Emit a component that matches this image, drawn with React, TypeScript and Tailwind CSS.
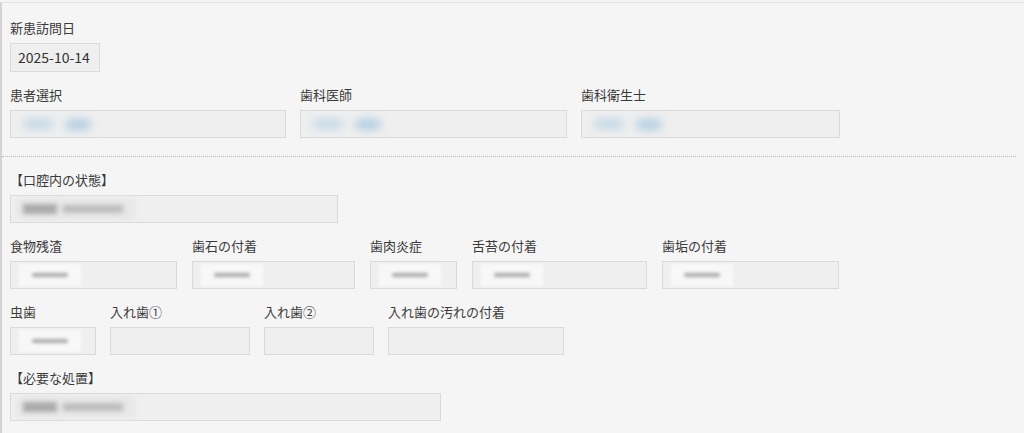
const font = 'font-["Noto_Sans_CJK_JP","Noto_Sans",sans-serif]';

type Blur = 'name' | 'short' | 'long' | 'none';

function BlurContent({ kind }: { kind: Blur }) {
  if (kind === 'name') {
    return (
      <span className="flex items-center gap-[12px] pl-[12px] blur-[4px]">
        <span className="h-[10px] w-[30px] rounded-full bg-[#c4d8e6]" />
        <span className="h-[11px] w-[26px] rounded-full bg-[#b3cfe2]" />
      </span>
    );
  }
  if (kind === 'short') {
    return (
      <span className="ml-[8px] flex h-[22px] w-[62px] items-center justify-center bg-[#f8f8f8] blur-[1px]">
        <span className="h-[4px] w-[36px] rounded-full bg-[#a8a8a8] blur-[1.5px]" />
      </span>
    );
  }
  if (kind === 'long') {
    return (
      <span className="ml-[6px] flex h-[22px] w-[118px] items-center bg-[#e8e8e8] px-[6px] blur-[2.5px]">
        <span className="h-[10px] w-[34px] bg-[#aaaaaa]" />
        <span className="ml-[6px] h-[8px] w-[60px] bg-[#bbbbbb]" />
      </span>
    );
  }
  return null;
}

function Label({ children }: { children: React.ReactNode }) {
  return <div className="h-[16px] text-[13px] leading-[16px] text-[#3a3a3a]">{children}</div>;
}

function Field({
  label,
  width,
  blur = 'none',
}: {
  label: string;
  width: number;
  blur?: Blur;
}) {
  return (
    <div className="flex flex-col" style={{ width }}>
      <Label>{label}</Label>
      <div className="mt-[7px] flex h-[28px] items-center border border-[#dadada] bg-[#efefef]">
        <BlurContent kind={blur} />
      </div>
    </div>
  );
}

export default function App() {
  return (
    <div className={`${font} h-[433px] w-[1024px] overflow-hidden bg-[#f5f5f5]`}>
      <div className="mt-[2px] h-[431px] border-l-2 border-t border-l-[#d4d4d4] border-t-[#e3e3e3] pl-[8px] pt-[17px]">
        {/* visit date */}
        <div className="flex flex-col">
          <Label>新患訪問日</Label>
          <div className="mt-[7px] flex h-[29px] w-[90px] items-center border border-[#dadada] bg-[#efefef] pl-[7px] text-[14px] text-[#333]">
            2025-10-14
          </div>
        </div>

        {/* staff */}
        <div className="mt-[15px] flex gap-[14px]">
          <Field label="患者選択" width={276} blur="name" />
          <Field label="歯科医師" width={267} blur="name" />
          <Field label="歯科衛生士" width={259} blur="name" />
        </div>

        <div className="-ml-[8px] mt-[18px] w-[1014px] border-t border-dotted border-[#b8b8b8]" />

        {/* oral condition */}
        <div className="mt-[15px]">
          <div className="flex w-[328px] flex-col">
            <Label>【口腔内の状態】</Label>
            <div className="mt-[7px] flex h-[28px] items-center border border-[#dadada] bg-[#efefef]">
              <BlurContent kind="long" />
            </div>
          </div>
        </div>

        <div className="mt-[15px] flex gap-[15px]">
          <Field label="食物残渣" width={167} blur="short" />
          <Field label="歯石の付着" width={163} blur="short" />
          <Field label="歯肉炎症" width={87} blur="short" />
          <Field label="舌苔の付着" width={175} blur="short" />
          <Field label="歯垢の付着" width={177} blur="short" />
        </div>

        <div className="mt-[15px] flex gap-[14px]">
          <Field label="虫歯" width={86} blur="short" />
          <Field label="入れ歯①" width={140} />
          <Field label="入れ歯②" width={110} />
          <Field label="入れ歯の汚れの付着" width={176} />
        </div>

        {/* treatment */}
        <div className="mt-[15px] flex w-[431px] flex-col">
          <Label>【必要な処置】</Label>
          <div className="mt-[7px] flex h-[28px] items-center border border-[#dadada] bg-[#efefef]">
            <BlurContent kind="long" />
          </div>
        </div>
      </div>
    </div>
  );
}
